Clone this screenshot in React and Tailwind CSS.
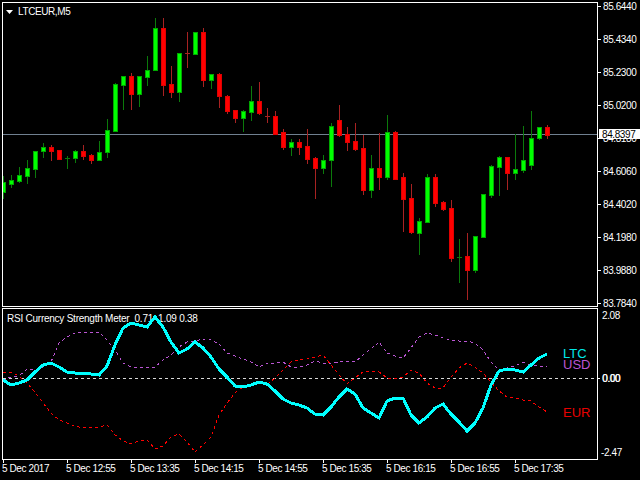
// MT4 style chart: LTCEUR M5 candles + RSI currency strength sub window
const candles = [
  [176, 182, 192, 198, 'g'], [175, 180, 184, 187, 'g'], [167, 175, 181, 182, 'g'], [160, 168, 176, 183, 'g'],
  [151, 151, 169, 177, 'g'], [143, 147, 151, 157, 'g'], [145, 147, 151, 160, 'r'], [150, 150, 159, 159, 'r'],
  [156, 158, 158, 168, 'g'], [150, 151, 158, 162, 'g'], [145, 151, 156, 159, 'r'], [154, 155, 160, 163, 'r'],
  [141, 152, 160, 160, 'g'], [119, 130, 152, 157, 'g'], [83, 84, 131, 131, 'g'], [76, 76, 85, 109, 'g'],
  [73, 76, 94, 109, 'r'], [76, 76, 94, 106, 'g'], [56, 70, 77, 85, 'g'], [18, 28, 70, 70, 'g'],
  [18, 28, 85, 95, 'r'], [66, 84, 92, 97, 'r'], [53, 53, 92, 101, 'g'], [32, 53, 53, 67, 'r'],
  [32, 32, 54, 54, 'g'], [28, 32, 80, 86, 'r'], [74, 74, 80, 88, 'g'], [73, 74, 96, 107, 'r'],
  [95, 96, 111, 113, 'r'], [110, 110, 118, 122, 'r'], [110, 111, 118, 131, 'g'], [86, 101, 112, 120, 'g'],
  [82, 101, 113, 114, 'r'], [108, 116, 116, 122, 'r'], [111, 116, 134, 134, 'r'], [129, 132, 147, 149, 'r'],
  [139, 142, 147, 155, 'g'], [139, 142, 147, 154, 'r'], [129, 146, 159, 163, 'r'], [157, 158, 168, 198, 'r'],
  [155, 160, 168, 173, 'g'], [123, 126, 160, 186, 'g'], [105, 120, 135, 136, 'r'], [127, 134, 142, 150, 'r'],
  [123, 141, 149, 150, 'r'], [135, 148, 190, 194, 'r'], [155, 168, 190, 197, 'g'], [133, 168, 177, 189, 'r'],
  [115, 132, 177, 179, 'g'], [131, 132, 179, 179, 'r'], [173, 177, 199, 231, 'r'], [184, 198, 232, 233, 'r'],
  [218, 221, 233, 254, 'g'], [174, 177, 222, 222, 'g'], [174, 177, 203, 206, 'r'], [201, 202, 209, 210, 'r'],
  [200, 208, 258, 261, 'r'], [239, 257, 257, 282, 'g'], [233, 256, 270, 299, 'r'], [236, 236, 270, 272, 'g'],
  [194, 194, 237, 237, 'g'], [165, 166, 195, 197, 'g'], [156, 157, 167, 195, 'g'], [157, 157, 173, 189, 'r'],
  [134, 169, 173, 179, 'g'], [126, 160, 170, 172, 'g'], [111, 138, 165, 169, 'g'], [127, 127, 138, 139, 'g'],
  [125, 127, 135, 138, 'r'],
];

const ltc = [380, 385, 383, 380, 372, 365, 363, 367, 372, 373, 373, 374, 375, 366, 345, 328, 323, 325, 327, 317, 327, 342, 353, 349, 342, 348, 357, 369, 377, 386, 387, 385, 382, 384, 391, 399, 403, 405, 408, 414, 415, 407, 397, 389, 394, 408, 413, 418, 401, 398, 398, 415, 423, 417, 408, 404, 414, 422, 431, 423, 408, 385, 371, 369, 370, 372, 365, 358, 354];
const usd = [380, 377, 376, 369, 370, 367, 362, 343, 337, 333, 332, 333, 332, 340, 350, 363, 367, 367, 367, 367, 360, 355, 347, 342, 341, 339, 340, 344, 353, 356, 359, 362, 367, 363, 363, 362, 367, 367, 365, 361, 363, 363, 362, 361, 362, 355, 349, 342, 353, 356, 358, 348, 337, 333, 335, 338, 340, 341, 341, 343, 350, 362, 370, 368, 366, 362, 365, 366, 366];
const eur = [372, 372, 376, 383, 392, 403, 413, 420, 423, 426, 428, 427, 427, 425, 435, 441, 444, 441, 440, 449, 446, 437, 434, 442, 452, 445, 437, 415, 403, 393, 387, 386, 383, 385, 378, 370, 362, 360, 359, 357, 355, 365, 375, 384, 378, 372, 371, 372, 378, 379, 377, 370, 373, 383, 388, 388, 377, 368, 363, 367, 373, 382, 391, 397, 398, 400, 401, 407, 412];

const prices = ['85.6440', '85.4340', '85.2300', '85.0200', '84.8180', '84.6060', '84.4020', '84.1980', '83.9880', '83.7840'];
const times = ['5 Dec 2017', '5 Dec 12:55', '5 Dec 13:35', '5 Dec 14:15', '5 Dec 14:55', '5 Dec 15:35', '5 Dec 16:15', '5 Dec 16:55', '5 Dec 17:35'];

const toPoints = (ys) => ys.map((y, i) => `${3 + i * 8},${y}`).join(' ');

const Candle = ({ data, i }) => {
  const [hi, top, bottom, lo, dir] = data;
  const x = 3 + i * 8;
  const wick = dir === 'g' ? '#0b7a0b' : '#a82222';
  const edge = dir === 'g' ? '#00a800' : '#e00000';
  const fill = dir === 'g' ? '#00ff00' : '#ff0000';
  const doji = bottom - top < 2;
  return (
    <g>
      <line x1={x + 0.5} x2={x + 0.5} y1={hi} y2={lo + 1} stroke={wick} />
      {doji
        ? <line x1={x - 2} x2={x + 3} y1={top + 0.5} y2={top + 0.5} stroke={wick} />
        : <rect x={x - 1.5} y={top + 0.5} width={4} height={bottom - top} fill={fill} stroke={edge} />}
    </g>
  );
};

const PriceChart = () => (
  <svg width="594" height="303" viewBox="3 3 594 303" shapeRendering="crispEdges" className="block">
    <line x1="3" x2="597" y1="134.5" y2="134.5" stroke="#708090" />
    {candles.map((c, i) => <Candle key={i} data={c} i={i} />)}
  </svg>
);

const StrengthChart = () => (
  <svg width="594" height="150" viewBox="3 309 594 150" shapeRendering="crispEdges" className="block relative">
    <line x1="3" x2="597" y1="378.5" y2="378.5" stroke="#d8d8d8" strokeDasharray="3 3" />
    <polyline points={toPoints(usd)} fill="none" stroke="#ba55d3" strokeDasharray="3 3" />
    <polyline points={toPoints(eur)} fill="none" stroke="#ff0000" strokeDasharray="3 3" />
    <polyline points={toPoints(ltc)} fill="none" stroke="#00ffff" strokeWidth="3" />
  </svg>
);

export default function App() {
  return (
    <div className="w-[640px] h-[480px] overflow-hidden bg-black text-white pt-[2px] pl-[2px] text-[10px] leading-[9px] tracking-[-0.4px] [font-family:'Liberation_Sans',sans-serif]">
      {/* Price window */}
      <div className="flex h-[305px]">
        <div className="relative w-[596px] h-[305px] border border-white">
          <PriceChart />
          <div className="absolute left-[3px] top-[4px] flex items-center gap-[5px]">
            <svg width="7" height="4" viewBox="0 0 7 4"><polygon points="0,0 7,0 3.5,4" fill="#fff" /></svg>
            <span>LTCEUR,M5</span>
          </div>
        </div>
        <div className="relative flex-1 flex flex-col gap-[24px]">
          {prices.map((p) => (
            <div key={p} className="flex items-center h-[9px]">
              <div className="w-[3px] h-px bg-white" />
              <span className="ml-[2px]">{p}</span>
            </div>
          ))}
          <div className="absolute left-[1px] top-[127px] right-0 h-[10px] flex items-center bg-white text-black pl-[3px]">84.8397</div>
        </div>
      </div>

      {/* Indicator window */}
      <div className="flex h-[152px] mt-px">
        <div className="relative w-[596px] h-[152px] border border-white">
          <div className="absolute left-[4px] top-[5px] whitespace-pre tracking-[-0.24px]">RSI Currency Strength Meter  0.71  1.09 0.38</div>
          <StrengthChart />
          <div className="absolute left-[560px] top-[39px] flex flex-col text-[13px] leading-[11px] tracking-normal">
            <span className="text-[#00e8e8]">LTC</span>
            <span className="text-[#ba55d3]">USD</span>
            <span className="text-[#e80000] mt-[37px]">EUR</span>
          </div>
        </div>
        <div className="flex-1 flex flex-col pt-[3px]">
          <span className="h-[9px] ml-[4px]">2.08</span>
          <div className="flex items-center h-[9px] mt-[54px]">
            <div className="w-[2px] h-px bg-white" />
            <span className="ml-[2px] [text-shadow:0.6px_0_0_#fff]">0.00</span>
          </div>
          <span className="h-[9px] ml-[3px] mt-[65px]">-2.47</span>
        </div>
      </div>

      {/* Time axis */}
      <div className="flex pl-px">
        {times.map((t) => (
          <div key={t} className="w-[64px] flex flex-col">
            <div className="w-px h-[3px] bg-white" />
            <span className="mt-px -ml-px whitespace-nowrap">{t}</span>
          </div>
        ))}
      </div>
    </div>
  );
}
